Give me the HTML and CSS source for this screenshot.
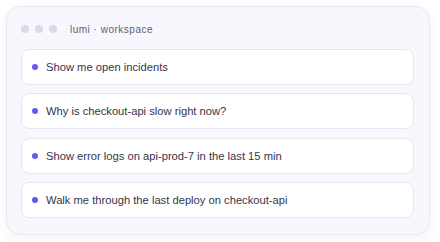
FILE: index.html
```html
<!DOCTYPE html>
<html lang="en">
<head>
    <meta charset="UTF-8">
    <meta name="viewport" content="width=device-width, initial-scale=1.0">
    <title>lumi · workspace</title>
    <link rel="stylesheet" href="styles.css">
</head>
<body>
    <div class="window">
        <div class="window-bar">
            <div class="dots">
                <span class="dot"></span>
                <span class="dot"></span>
                <span class="dot"></span>
            </div>
            <span class="window-title">lumi · workspace</span>
        </div>
        <div class="prompts">
            <div class="prompt"><span class="bullet"></span>Show me open incidents</div>
            <div class="prompt"><span class="bullet"></span>Why is checkout-api slow right now?</div>
            <div class="prompt"><span class="bullet"></span>Show error logs on api-prod-7 in the last 15 min</div>
            <div class="prompt"><span class="bullet"></span>Walk me through the last deploy on checkout-api</div>
        </div>
    </div>
</body>
</html>
```

FILE: styles.css
```css
body {
    margin: 0;
    padding: 6px;
    font-family: "Liberation Sans", Arial, sans-serif;
    background-color: #ffffff;
}
.window {
    width: 424px;
    box-sizing: border-box;
    padding: 15px 15px 16px 14px;
    background-color: #f8f7fd;
    border: 1px solid #e9e7f3;
    border-radius: 14px;
    box-shadow: 0 4px 14px rgba(60, 50, 120, 0.06);
}
.window-bar {
    display: flex;
    align-items: center;
    height: 14px;
    margin-bottom: 13px;
}
.dots {
    display: flex;
    gap: 6px;
    margin-right: 13px;
}
.dot {
    width: 8px;
    height: 8px;
    border-radius: 50%;
    background-color: #d9dbed;
}
.window-title {
    font-size: 10px;
    letter-spacing: 0.5px;
    color: #5f5f70;
}
.prompts {
    display: flex;
    flex-direction: column;
    gap: 8.3px;
}
.prompt {
    display: flex;
    align-items: center;
    height: 36px;
    box-sizing: border-box;
    padding: 0 10px;
    background-color: #ffffff;
    border: 1px solid #e8e6f2;
    border-radius: 8px;
    font-size: 11.2px;
    color: #35354a;
}
.bullet {
    width: 6px;
    height: 6px;
    border-radius: 50%;
    background-color: #6657f6;
    margin-right: 8px;
    flex-shrink: 0;
}
```
